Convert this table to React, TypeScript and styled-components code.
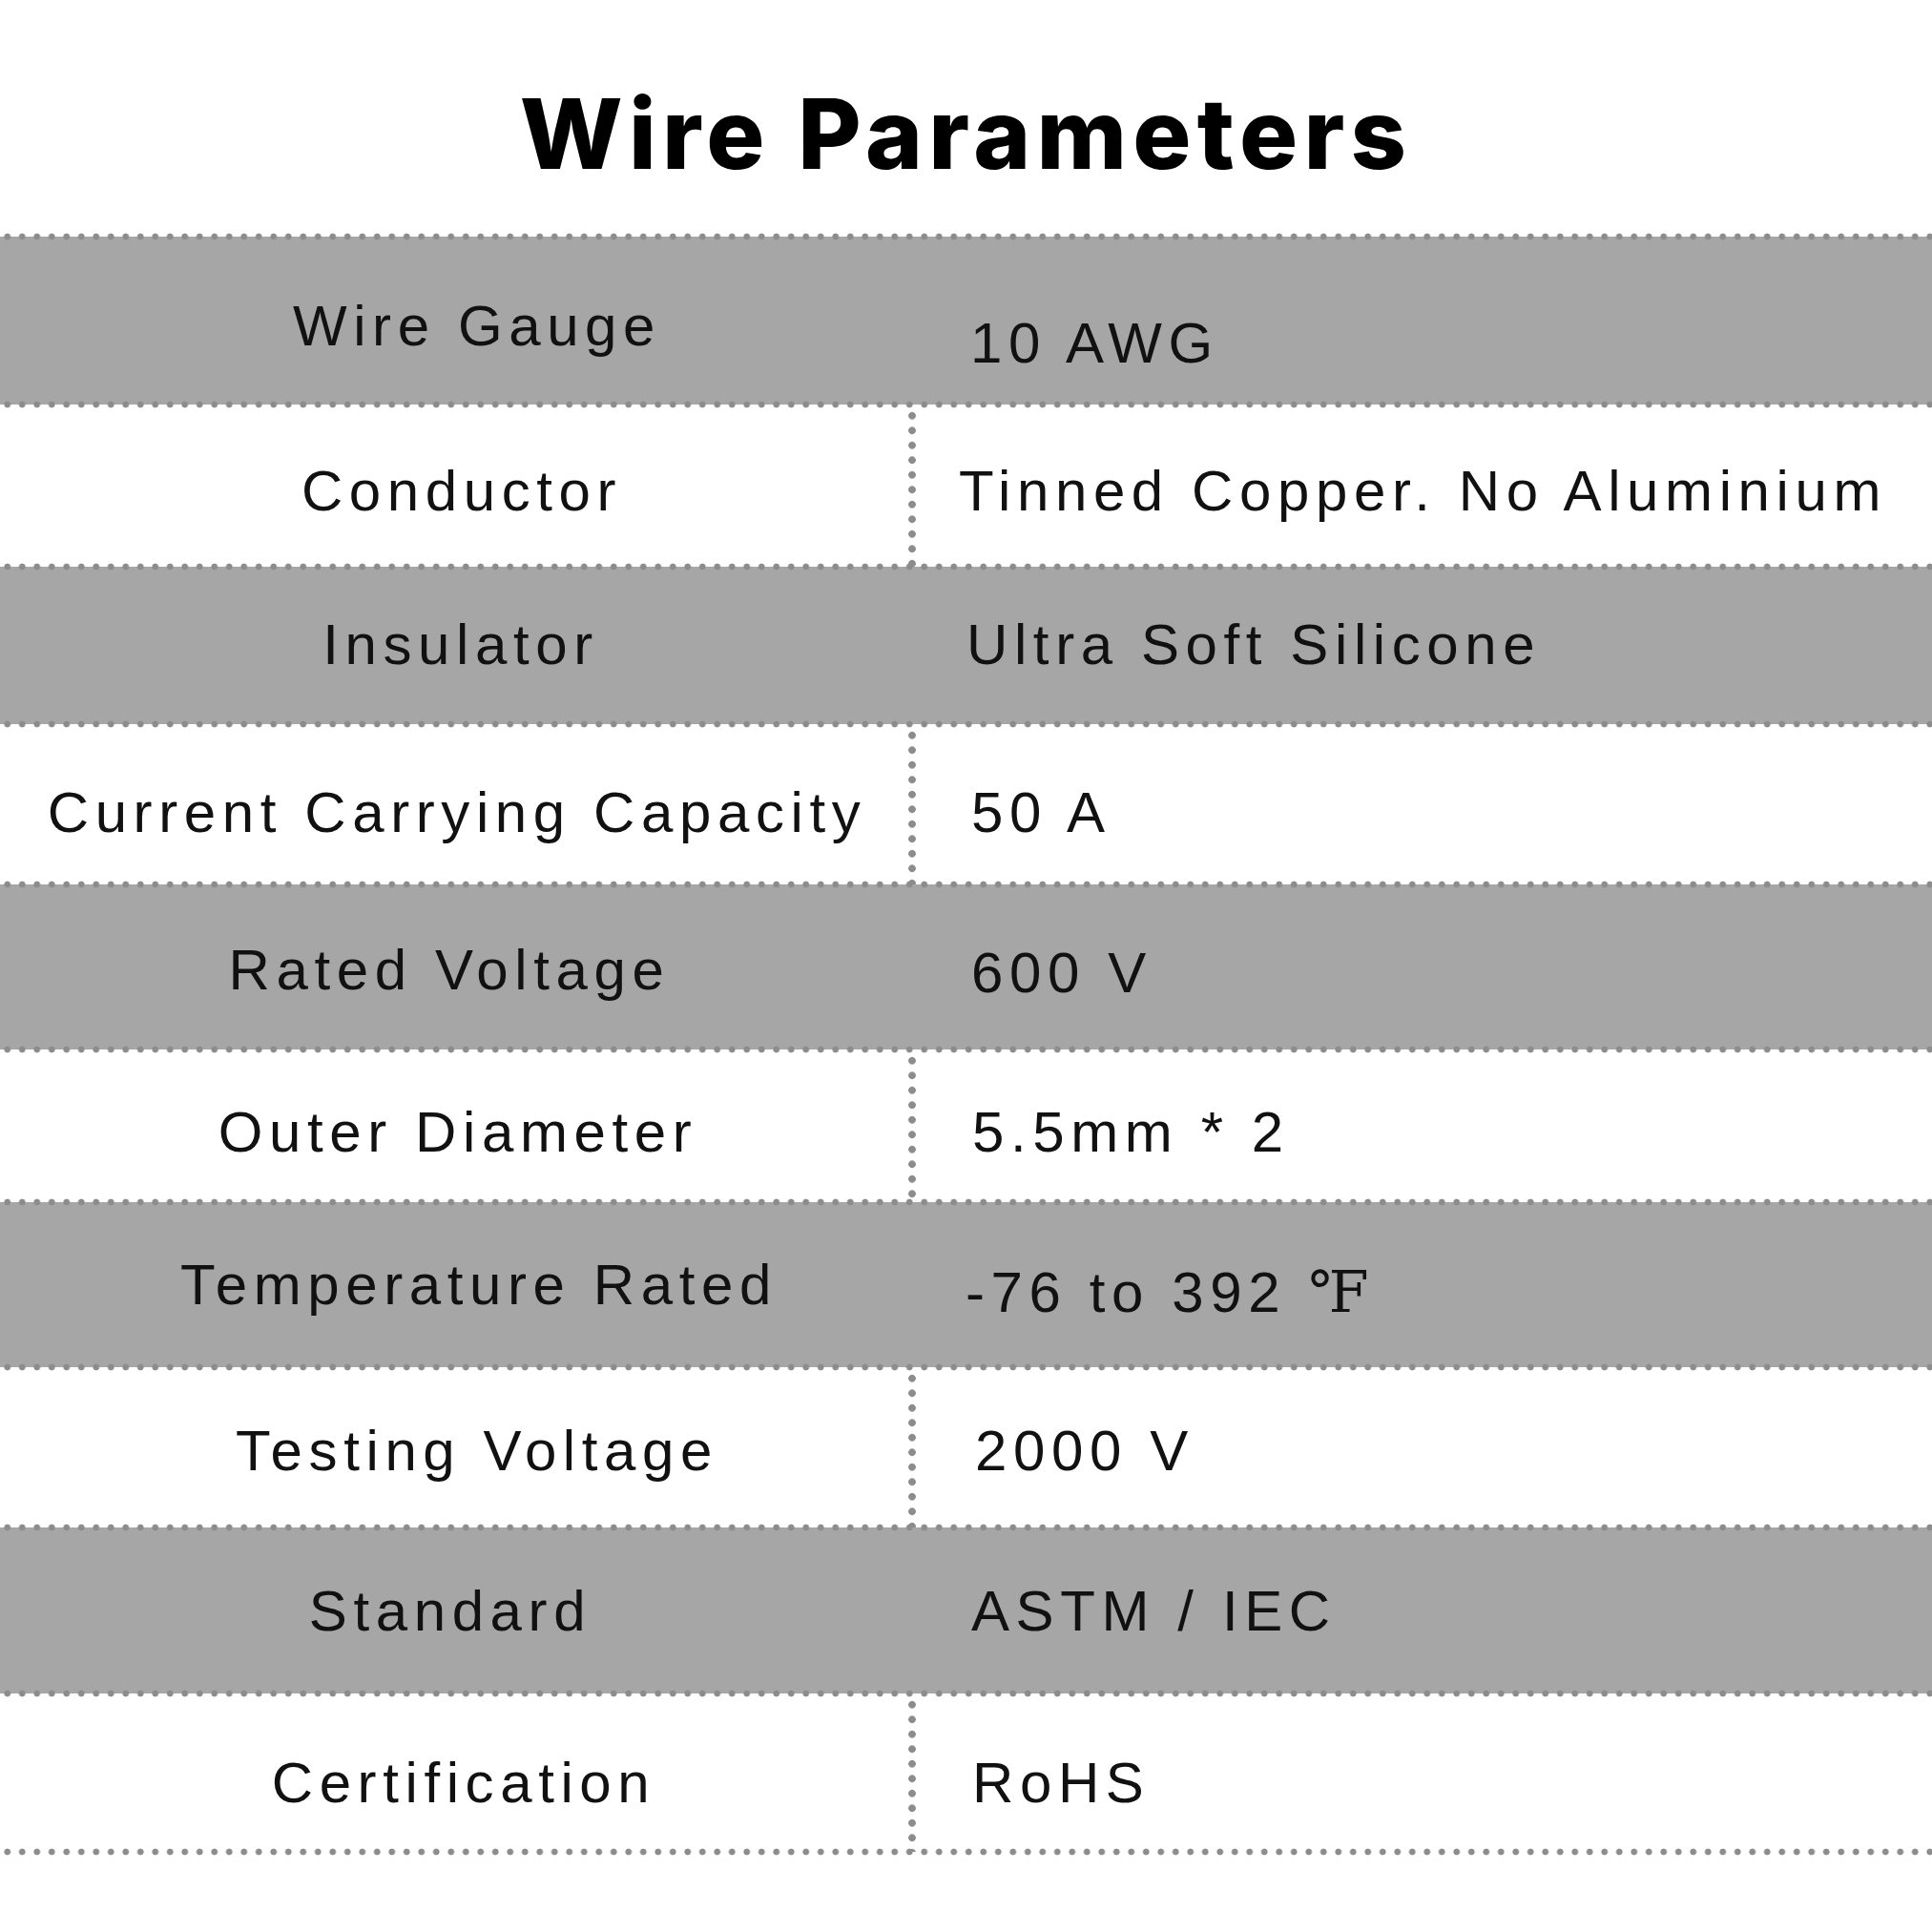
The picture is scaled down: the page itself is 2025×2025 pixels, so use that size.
import styled, { createGlobalStyle } from "styled-components";

const GlobalStyle = createGlobalStyle`
  html, body {
    margin: 0;
    padding: 0;
    background: #ffffff;
  }
`;

const DOT = "#8c8c8c";
const SHADE = "#a6a6a6";

const Sheet = styled.div`
  width: 100%;
  min-height: 2025px;
  background: #ffffff;
`;

const Title = styled.h1`
  margin: 0;
  height: 248px;
  box-sizing: border-box;
  padding-top: 89px;
  font-family: Inter, "Liberation Sans", sans-serif;
  font-weight: 800;
  font-size: 102px;
  line-height: 1;
  letter-spacing: 6.2px;
  text-align: center;
  color: #000000;
`;

const Table = styled.div`
  display: flex;
  flex-direction: column;
`;

const Row = styled.div<{ $shaded: boolean; $height: number }>`
  position: relative;
  display: grid;
  grid-template-columns: 952px 1fr;
  height: ${(p) => p.$height}px;
  background: ${(p) => (p.$shaded ? SHADE : "#ffffff")};

  &::before,
  &:last-child::after {
    content: "";
    position: absolute;
    left: 0;
    right: 0;
    height: 8px;
    z-index: 1;
    background: radial-gradient(circle, ${DOT} 3px, transparent 3.8px) 0 0 / 15.5px 8px repeat-x;
  }

  &::before {
    top: -4px;
  }

  &:last-child::after {
    bottom: -4px;
  }
`;

const Cell = styled.div`
  display: flex;
  align-items: center;
  font-family: "Liberation Sans", Arial, sans-serif;
  font-size: 60px;
  line-height: 1;
  letter-spacing: 6.6px;
  color: #111111;
  white-space: nowrap;
`;

const LabelCell = styled(Cell)`
  justify-content: center;
`;

const ValueCell = styled(Cell)<{ $divided: boolean }>`
  padding-left: 66px;
  background: ${(p) =>
    p.$divided
      ? `radial-gradient(circle, ${DOT} 3.5px, transparent 4.2px) 0 4px / 8px 15.5px repeat-y`
      : "none"};
`;

const Text = styled.span<{ $dx: number; $dy: number }>`
  margin-left: ${(p) => p.$dx}px;
  margin-top: ${(p) => p.$dy * 2}px;
`;

const Unit = styled.span`
  font-family: "DejaVu Serif", "Noto Sans CJK SC", serif;
  letter-spacing: 0;
`;

type Spec = {
  label: string;
  value: React.ReactNode;
  height: number;
  ldx: number;
  ldy: number;
  vdx: number;
  vdy: number;
};

const specs: Spec[] = [
  { label: "Wire Gauge", value: "10 AWG", height: 176, ldx: 24, ldy: 6, vdx: -1, vdy: 24 },
  { label: "Conductor", value: "Tinned Copper. No Aluminium", height: 170, ldx: 8, ldy: 6, vdx: -13, vdy: 6 },
  { label: "Insulator", value: "Ultra Soft Silicone", height: 165, ldx: 7, ldy: -1, vdx: -5, vdy: -1 },
  { label: "Current Carrying Capacity", value: "50 A", height: 168, ldx: 3, ldy: 9, vdx: 0, vdy: 9 },
  { label: "Rated Voltage", value: "600 V", height: 173, ldx: -5, ldy: 3, vdx: 0, vdy: 6 },
  { label: "Outer Diameter", value: "5.5mm * 2", height: 160, ldx: 4, ldy: 7, vdx: 1, vdy: 7 },
  {
    label: "Temperature Rated",
    value: (
      <>
        -76 to 392 <Unit>℉</Unit>
      </>
    ),
    height: 173,
    ldx: 26,
    ldy: 0,
    vdx: -6,
    vdy: 8,
  },
  { label: "Testing Voltage", value: "2000 V", height: 168, ldx: 24, ldy: 4, vdx: 4, vdy: 4 },
  { label: "Standard", value: "ASTM / IEC", height: 174, ldx: -4, ldy: 1, vdx: 0, vdy: 1 },
  { label: "Certification", value: "RoHS", height: 166, ldx: 10, ldy: 11, vdx: 1, vdy: 11 },
];

export default function App() {
  return (
    <>
      <GlobalStyle />
      <Sheet>
        <Title>Wire Parameters</Title>
        <Table>
          {specs.map((s, i) => {
            const shaded = i % 2 === 0;
            return (
              <Row key={s.label} $shaded={shaded} $height={s.height}>
                <LabelCell>
                  <Text $dx={s.ldx * 2} $dy={s.ldy}>
                    {s.label}
                  </Text>
                </LabelCell>
                <ValueCell $divided={!shaded}>
                  <Text $dx={s.vdx} $dy={s.vdy}>
                    {s.value}
                  </Text>
                </ValueCell>
              </Row>
            );
          })}
        </Table>
      </Sheet>
    </>
  );
}
